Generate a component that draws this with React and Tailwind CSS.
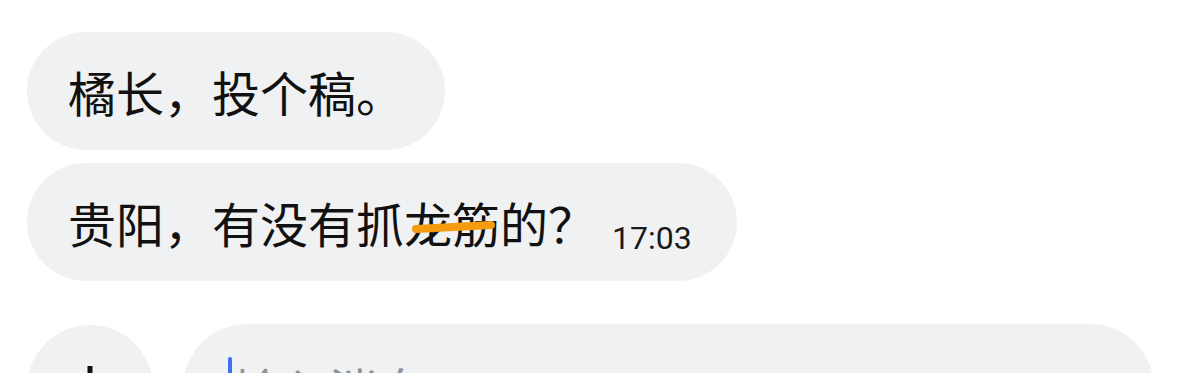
import React from "react";

const cjk = "font-['Noto_Sans_CJK_SC','Noto_Sans',sans-serif]";

export default function App() {
  return (
    <div className={`min-h-screen bg-white pt-[32px] pl-[27px] pr-[25px] ${cjk} text-[#111]`}>
      <div className="flex flex-col items-start gap-[13px]">
        <div className="h-[118px] rounded-full bg-[#eff1f3] px-[41px] flex items-center text-[48px] leading-none">
          <span>橘长，投个稿。</span>
        </div>
        <div className="h-[118px] rounded-full bg-[#eff1f3] pl-[41px] pr-[45px] flex items-center text-[48px] leading-none">
          <span className="relative">
            贵阳，有没有抓龙筋的？
            <svg className="absolute left-0 top-0 overflow-visible" width="1" height="1">
              <path d="M348 31 L423 27" stroke="#f59b0d" strokeWidth="8" strokeLinecap="round" fill="none" />
            </svg>
          </span>
          <span className="self-end mb-[27px] ml-[16px] font-['Roboto',sans-serif] text-[32px] leading-none text-[#1a1a1a]">
            17:03
          </span>
        </div>
      </div>
      <div className="mt-[43px] flex items-center gap-[30px]">
        <div className="w-[126px] h-[126px] shrink-0 rounded-full bg-[#eff1f3] flex items-center justify-center">
          <svg width="44" height="44" viewBox="0 0 44 44">
            <rect x="19.5" y="0" width="5" height="44" fill="#111" />
            <rect x="0" y="19.5" width="44" height="5" fill="#111" />
          </svg>
        </div>
        <div className="flex-1 h-[128px] rounded-full bg-[#eff1f3] pl-[45px] flex items-center">
          <span className="w-[4px] h-[62px] rounded-full bg-[#3d6ef5]"></span>
          <span className="ml-[1px] text-[48px] leading-none text-[#8d9196]">输入消息</span>
        </div>
      </div>
    </div>
  );
}
